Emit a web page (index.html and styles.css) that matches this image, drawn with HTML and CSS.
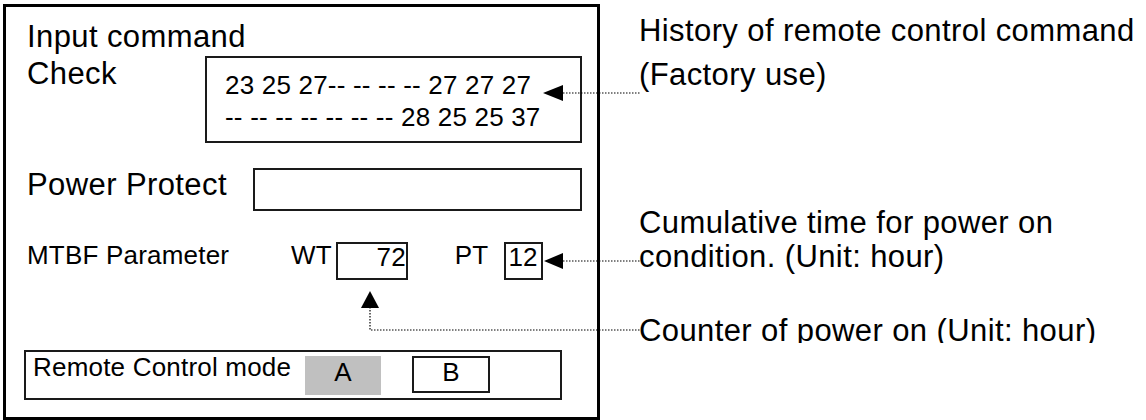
FILE: index.html
```html
<!DOCTYPE html>
<html lang="en">
<head>
<meta charset="UTF-8">
<meta name="viewport" content="width=device-width, initial-scale=1.0">
<title>Service menu - Input command check</title>
<link rel="stylesheet" href="styles.css">
</head>
<body>
<div class="sheet">

  <div class="panel">
    <div class="title">Input command</div>

    <div class="row">
      <div class="label label-check">Check</div>
      <div class="history-box">
        <div>23 25 27-- -- -- -- 27 27 27</div>
        <div>-- -- -- -- -- -- -- 28 25 25 37</div>
      </div>
    </div>

    <div class="row row-power">
      <div class="label label-power">Power Protect</div>
      <div class="power-box"></div>
    </div>

    <div class="row row-mtbf">
      <div class="small mtbf-label">MTBF Parameter</div>
      <div class="small">WT</div>
      <div class="small value wt-box">72</div>
      <div class="small pt-label">PT</div>
      <div class="small value pt-box">12</div>
    </div>

    <div class="mode-box">
      <div class="small mode-label">Remote Control mode</div>
      <div class="small mode-btn mode-active">A</div>
      <div class="small mode-btn mode-b">B</div>
    </div>
  </div>

  <div class="notes">
    <div class="note note-history">History of remote control command<br>(Factory use)</div>
    <div class="note note-time">Cumulative time for power on<br>condition. (Unit: hour)</div>
    <div class="note note-counter">Counter of power on (Unit: hour)</div>
  </div>

  <!-- dotted leader lines from the notes to the fields -->
  <svg class="leaders" width="1146" height="420" viewBox="0 0 1146 420">
    <g stroke="#000" stroke-width="1.2" stroke-dasharray="1.5 1.5" fill="none">
      <path d="M563 93 H640"/>
      <path d="M563 261 H640"/>
      <path d="M370 307 V330 H640"/>
    </g>
    <g fill="#000">
      <polygon points="543,93 563,85 563,101"/>
      <polygon points="544,261 563,253 563,269"/>
      <polygon points="370,291 361,308 379,308"/>
    </g>
  </svg>

</div>
</body>
</html>
```

FILE: styles.css
```css
body {
  margin: 0;
  font-family: "Liberation Sans", Arial, sans-serif;
  color: #000;
  background: #fff;
}
.sheet {
  position: relative;
  display: flex;
  align-items: flex-start;
  width: 1146px;
  height: 420px;
  overflow: hidden;
}
.panel {
  box-sizing: border-box;
  width: 597px;
  height: 416px;
  margin: 4px 0 0 3px;
  padding: 11px 15px 0 21px;
  border: 3px solid #000;
}
.title, .label {
  font-size: 31px;
  line-height: 37px;
  letter-spacing: 0.4px;
  white-space: nowrap;
}
.row {
  display: flex;
  align-items: flex-start;
}
.label-check {
  width: 178px;
}
.history-box {
  box-sizing: border-box;
  width: 377px;
  height: 87px;
  margin-top: 1px;
  padding: 11px 0 0 18px;
  border: 2px solid #1a1a1a;
  font-size: 26px;
  line-height: 32px;
  letter-spacing: 0.2px;
  white-space: nowrap;
}
.row-power {
  margin-top: 23px;
}
.label-power {
  width: 226px;
}
.power-box {
  box-sizing: border-box;
  width: 329px;
  height: 43px;
  margin-top: 2px;
  border: 2px solid #1a1a1a;
}
.row-mtbf {
  height: 38px;
  margin-top: 31px;
}
.small {
  font-size: 26px;
  line-height: 26px;
  letter-spacing: 0.2px;
  white-space: nowrap;
}
.mtbf-label {
  width: 264px;
}
.value {
  box-sizing: border-box;
  height: 38px;
  border: 2px solid #1a1a1a;
}
.wt-box {
  width: 72px;
  margin-left: 4px;
  text-align: right;
}
.pt-label {
  margin-left: 47px;
}
.pt-box {
  width: 39px;
  margin-left: 16px;
  padding-left: 2px;
}
.mode-box {
  box-sizing: border-box;
  display: flex;
  align-items: flex-start;
  width: 538px;
  height: 50px;
  margin: 70px 0 0 -3px;
  padding: 4px 0 0 7px;
  border: 2px solid #1a1a1a;
}
.mode-label {
  width: 272px;
  line-height: 22px;
}
.mode-btn {
  box-sizing: border-box;
  width: 76px;
  height: 39px;
  line-height: 32px;
  text-align: center;
}
.mode-active {
  background: #c0c0c0;
}
.mode-b {
  width: 78px;
  height: 37px;
  margin-left: 31px;
  border: 2px solid #1a1a1a;
  line-height: 28px;
}
.notes {
  margin-left: 39px;
  font-size: 31px;
  letter-spacing: 0.4px;
  white-space: nowrap;
}
.note-history {
  margin-top: 9px;
  line-height: 44px;
}
.note-time {
  margin-top: 109px;
  line-height: 34px;
}
.note-counter {
  height: 29px;
  margin-top: 40px;
  line-height: 34px;
  overflow: hidden;
}
.leaders {
  position: absolute;
  top: 0;
  left: 0;
  pointer-events: none;
}
```
